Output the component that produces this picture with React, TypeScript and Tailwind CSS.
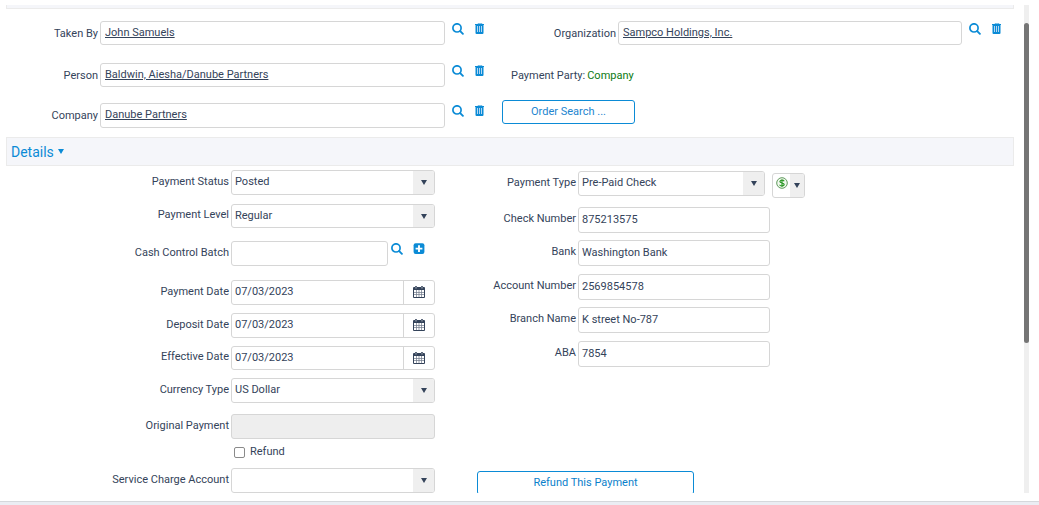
import type { ReactNode } from "react";

function SearchIcon() {
  return (
    <svg viewBox="0 0 12 12" className="size-3" fill="none" stroke="currentColor" aria-hidden="true">
      <circle cx="5" cy="4.900" r="4.100" strokeWidth="1.700" />
      <path d="M8.200 8.100 10.900 10.800" strokeWidth="1.900" strokeLinecap="round" />
    </svg>
  );
}

function TrashIcon() {
  return (
    <svg viewBox="0 0 12 12" className="size-3" aria-hidden="true">
      <path d="M4 1V.5h4V1" fill="none" stroke="currentColor" strokeWidth="1" opacity=".5" />
      <path d="M1 1h9v1H1z" fill="currentColor" />
      <path d="M1.500 2h8v8q0 1-1 1h-6q-1 0-1-1z" fill="currentColor" />
      <path d="M3 3h1v6H3zM5 3h1v6H5zM7 3h1v6H7z" fill="#b4d6f2" />
    </svg>
  );
}

function PlusIcon() {
  return (
    <svg viewBox="0 0 12 12" className="size-3" aria-hidden="true">
      <rect x=".6" y=".2" width="10.800" height="10.800" rx="2" fill="currentColor" />
      <path d="M6 2.200v6.800M2.600 5.600h6.800" stroke="#fff" strokeWidth="1.900" />
    </svg>
  );
}

function CalendarIcon() {
  return (
    <svg viewBox="0 0 12 12" className="size-3" aria-hidden="true">
      <path d="M1 1h10q1 0 1 1v9q0 1-1 1H1q-1 0-1-1V2q0-1 1-1z" fill="#34435a" />
      <path d="M1 4h10v7H1z" fill="#fff" />
      <path d="M3.500 4v7M6 4v7M8.500 4v7M1 6.500h10M1 8.500h10" stroke="#6d7788" strokeWidth=".7" />
      <path d="M3 .9v1.700M9 .9v1.700" stroke="#34435a" strokeWidth="1.900" strokeLinecap="round" />
      <path d="M3 .9v1.700M9 .9v1.700" stroke="#fff" strokeWidth=".6" />
    </svg>
  );
}

function Caret({ className = "" }: { className?: string }) {
  return (
    <svg viewBox="0 0 6 5" className={`h-[5px] w-1.5 ${className}`} aria-hidden="true">
      <path d="M0 0h6L3 5z" fill="currentColor" />
    </svg>
  );
}

function DollarIcon() {
  return (
    <svg viewBox="0 0 12 12" className="size-3" fill="none" aria-hidden="true">
      <circle cx="6" cy="6" r="5.300" fill="#f1f8ee" stroke="#5f9a5c" strokeWidth="1" />
      <path
        d="M8.200 4.200Q7.600 3.200 6 3.200T3.900 4.500Q3.900 5.600 6 6t2.200 1.600Q8.200 8.900 6 8.900T3.700 7.800M6 2.200v7.700"
        stroke="#2f9a2a"
        strokeWidth="1.200"
      />
    </svg>
  );
}

const BOX = "rounded-[3px] border border-[#d6d6d6] bg-white";

function IconButton({ label, children }: { label: string; children: ReactNode }) {
  return (
    <button type="button" aria-label={label} className="size-3 text-[#0b8bd6]">
      {children}
    </button>
  );
}

function LookupRow(props: { id: string; label: string; value: string; labelWidth: string; className?: string }) {
  return (
    <div className={`flex ${props.className ?? "h-6"}`}>
      <label htmlFor={props.id} className={`shrink-0 self-center pt-px text-right ${props.labelWidth}`}>
        {props.label}
      </label>
      <input
        id={props.id}
        defaultValue={props.value}
        className={`ml-0.5 min-w-0 flex-1 px-1 pb-px underline ${BOX}`}
      />
      <div className="flex w-[52px] shrink-0 gap-2.5 pt-0.5 pl-[7px]">
        <IconButton label={`Find ${props.label}`}>
          <SearchIcon />
        </IconButton>
        <IconButton label={`Clear ${props.label}`}>
          <TrashIcon />
        </IconButton>
      </div>
    </div>
  );
}

function Row(props: { id: string; label: string; labelWidth?: string; className: string; children: ReactNode }) {
  return (
    <div className={`flex ${props.className}`}>
      <label
        htmlFor={props.id}
        className={`shrink-0 self-center pb-0.5 text-right ${props.labelWidth ?? "w-[223px]"}`}
      >
        {props.label}
      </label>
      <div className="ml-0.5 flex min-w-0 flex-1">{props.children}</div>
    </div>
  );
}

function Select({ id, value, className = "flex-1" }: { id: string; value: string; className?: string }) {
  return (
    <div className={`relative overflow-hidden ${BOX} ${className}`}>
      <select id={id} defaultValue={value} className="h-full w-full appearance-none bg-transparent px-[3px] pb-px">
        <option>{value}</option>
      </select>
      <span className="pointer-events-none absolute inset-y-0 right-0 flex w-[21px] items-center justify-center bg-[#efefef]">
        <Caret />
      </span>
    </div>
  );
}

function DateField({ id }: { id: string }) {
  return (
    <div className={`flex flex-1 ${BOX}`}>
      <input id={id} defaultValue="07/03/2023" className="min-w-0 flex-1 px-[3px] pb-px" />
      <button
        type="button"
        aria-label="Open calendar"
        className="flex w-[31px] items-center justify-center border-l border-[#d6d6d6] pb-px"
      >
        <CalendarIcon />
      </button>
    </div>
  );
}

const bankFields = [
  { id: "check", label: "Check Number", value: "875213575", gap: "mt-[11px]" },
  { id: "bank", label: "Bank", value: "Washington Bank", gap: "mt-[7px]" },
  { id: "account", label: "Account Number", value: "2569854578", gap: "mt-2" },
  { id: "branch", label: "Branch Name", value: "K street No-787", gap: "mt-[7px]" },
  { id: "aba", label: "ABA", value: "7854", gap: "mt-2" },
];

export default function App() {
  return (
    <div className="flex h-screen flex-col bg-white pt-[5px] font-[Roboto,sans-serif] text-[11px] leading-[14px] text-[#34435a]">
      <div className="flex min-h-0 flex-1 pr-2.5 pl-1.5">
        <main className="min-w-0 flex-1 overflow-hidden">
          <div className="h-1 border border-t-0 border-[#ebebeb] bg-[#f5f6fa]" />

          <section className="grid grid-cols-[491fr_512fr] gap-x-[5px] pt-3 pb-[9px]">
            <div>
              <LookupRow id="taken" label="Taken By" value="John Samuels" labelWidth="w-[92px]" />
              <LookupRow
                id="person"
                label="Person"
                value="Baldwin, Aiesha/Danube Partners"
                labelWidth="w-[92px]"
                className="mt-[18px] h-6"
              />
              <LookupRow
                id="company"
                label="Company"
                value="Danube Partners"
                labelWidth="w-[92px]"
                className="mt-4 h-[25px]"
              />
            </div>
            <div>
              <LookupRow id="org" label="Organization" value="Sampco Holdings, Inc." labelWidth="w-[114px]" />
              <p className="mt-[18px] flex h-6 items-center gap-0.5 pt-px pl-[9px]">
                <span>Payment Party:</span>
                <span className="text-[#0b7a12]">Company</span>
              </p>
              <button
                type="button"
                className="mt-[13px] block h-6 w-[133px] rounded-[3px] border border-[#0b8bd6] text-[#2385cf]"
              >
                Order Search ...
              </button>
            </div>
          </section>

          <h2 className="border border-[#ebebeb] bg-[#f5f6fa]">
            <button
              type="button"
              aria-expanded="true"
              className="flex h-[27px] items-center gap-1 pl-1 text-sm text-[#0b8bd6]"
            >
              Details
              <Caret />
            </button>
          </h2>

          <section className="grid grid-cols-[429fr_537fr] gap-x-[42px]">
            <div className="pt-1">
              <Row id="status" label="Payment Status" className="h-[25px]">
                <Select id="status" value="Posted" />
              </Row>
              <Row id="level" label="Payment Level" className="mt-[9px] h-6">
                <Select id="level" value="Regular" />
              </Row>
              <Row id="batch" label="Cash Control Batch" className="mt-[13px] h-[25px]">
                <input id="batch" className={`min-w-0 flex-1 px-[3px] ${BOX}`} />
                <div className="flex w-[47px] shrink-0 gap-2.5 pt-0.5 pl-[3px]">
                  <IconButton label="Find batch">
                    <SearchIcon />
                  </IconButton>
                  <IconButton label="Add batch">
                    <PlusIcon />
                  </IconButton>
                </div>
              </Row>
              <Row id="payDate" label="Payment Date" className="mt-3.5 h-[25px]">
                <DateField id="payDate" />
              </Row>
              <Row id="depDate" label="Deposit Date" className="mt-2 h-[25px]">
                <DateField id="depDate" />
              </Row>
              <Row id="effDate" label="Effective Date" className="mt-2 h-6">
                <DateField id="effDate" />
              </Row>
              <Row id="currency" label="Currency Type" className="mt-2 h-[25px]">
                <Select id="currency" value="US Dollar" />
              </Row>
              <Row id="original" label="Original Payment" className="mt-[11px] h-[25px]">
                <input
                  id="original"
                  disabled
                  className="min-w-0 flex-1 rounded-[3px] border border-[#d6d6d6] bg-[#eeeeee] px-[3px]"
                />
              </Row>
              <div className="mt-2 flex h-[13px] items-start gap-[5px] pl-[228px]">
                <input
                  id="refund"
                  type="checkbox"
                  className="size-[11px] appearance-none rounded-[2px] border border-[#8a8a8a] bg-white checked:bg-[#0b8bd6]"
                />
                <label htmlFor="refund" className="leading-[10px]">
                  Refund
                </label>
              </div>
              <Row id="service" label="Service Charge Account" className="mt-2 h-[25px]">
                <Select id="service" value="" />
              </Row>
            </div>

            <div className="pt-[5px]">
              <Row id="type" label="Payment Type" labelWidth="w-[99px]" className="h-[25px]">
                <Select id="type" value="Pre-Paid Check" className="w-[187px]" />
                <button
                  type="button"
                  aria-label="Payment actions"
                  className={`mt-0.5 ml-[7px] flex h-[25px] w-[33px] overflow-hidden ${BOX}`}
                >
                  <span className="flex h-full flex-1 justify-center pt-[3px]">
                    <DollarIcon />
                  </span>
                  <span className="flex h-full w-3.5 items-center justify-center bg-[#efefef]">
                    <Caret />
                  </span>
                </button>
              </Row>
              {bankFields.map((f) => (
                <Row key={f.id} id={f.id} label={f.label} labelWidth="w-[99px]" className={`h-[26px] ${f.gap}`}>
                  <input id={f.id} defaultValue={f.value} className={`w-48 px-[3px] ${BOX}`} />
                </Row>
              ))}
              <button
                type="button"
                className="mt-[104px] block h-6 w-[217px] rounded-[3px] border border-[#0b8bd6] text-[#0b7fcb]"
              >
                Refund This Payment
              </button>
            </div>
          </section>
        </main>

        <div className="ml-2.5 w-[5px] shrink-0 bg-[#efefef] pt-[18px]">
          <div className="h-[68%] rounded-full bg-[#757575]" />
        </div>
      </div>
      <footer className="mt-2 h-1 shrink-0 border-t border-[#d5d8dc] bg-[#ebedf3]" />
    </div>
  );
}
